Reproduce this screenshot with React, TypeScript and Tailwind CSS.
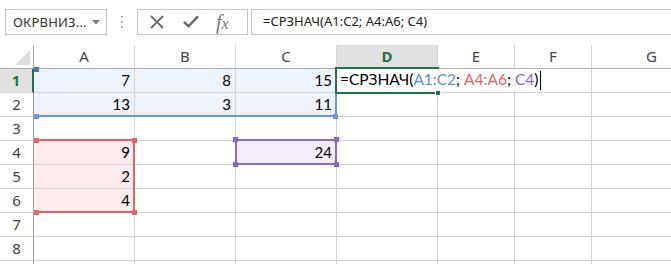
import React from "react";

const cols = ["A", "B", "C", "D", "E", "F", "G"];
const rows = [1, 2, 3, 4, 5, 6, 7, 8, 9];

type CellVal = { v?: string; bg?: string };
const data: Record<string, CellVal> = {
  A1: { v: "7", bg: "bg-[#eef2fb]" },
  B1: { v: "8", bg: "bg-[#eef2fb]" },
  C1: { v: "15", bg: "bg-[#eef2fb]" },
  A2: { v: "13", bg: "bg-[#eef2fb]" },
  B2: { v: "3", bg: "bg-[#eef2fb]" },
  C2: { v: "11", bg: "bg-[#eef2fb]" },
  A4: { v: "9", bg: "bg-[#fdeaea]" },
  A5: { v: "2", bg: "bg-[#fdeaea]" },
  A6: { v: "4", bg: "bg-[#fdeaea]" },
  C4: { v: "24", bg: "bg-[#f2eef9]" },
};

function Handle({ className }: { className: string }) {
  return <div className={`absolute w-[5px] h-[5px] ${className}`} />;
}

export default function App() {
  return (
    <div className="w-[671px] h-[264px] overflow-hidden bg-white" style={{ fontFamily: '"Noto Sans", "Open Sans", sans-serif' }}>
      {/* top bar */}
      <div className="h-[45px] flex items-start pt-[9px] bg-white">
        <div className="ml-[5px] w-[102px] h-[26px] border border-[#c6c6c6] flex items-center pl-[7px] pr-[6px] text-[13px] text-[#333]">
          <span className="flex-1 leading-none tracking-[0.2px]">ОКРВНИЗ...</span>
          <svg width="8" height="5" viewBox="0 0 8 5"><path d="M0 0 H8 L4 4.5 Z" fill="#777" /></svg>
        </div>
        <div className="w-[30px] h-[26px] flex flex-col items-center justify-center gap-[3px]">
          <div className="w-[2px] h-[2px] bg-[#b5b5b5]" />
          <div className="w-[2px] h-[2px] bg-[#b5b5b5]" />
          <div className="w-[2px] h-[2px] bg-[#b5b5b5]" />
        </div>
        <div className="w-[111px] h-[26px] border border-[#c6c6c6] flex items-center">
          <svg className="ml-[11px]" width="16" height="16" viewBox="0 0 16 16">
            <path d="M2 2 L14 14 M14 2 L2 14" stroke="#6b6b6b" strokeWidth="1.8" fill="none" />
          </svg>
          <svg className="ml-[17px]" width="18" height="16" viewBox="0 0 18 16">
            <path d="M1 8.5 L6.5 14 L17 3 L15 1.5 L6.5 10.5 L3 7 Z" fill="#6b6b6b" />
          </svg>
          <span className="ml-[16px] text-[#777] italic text-[20px] leading-none" style={{ fontFamily: '"Liberation Serif", "DejaVu Serif", serif' }}>
            <span>f</span><span className="text-[16px]">x</span>
          </span>
        </div>
        <div className="ml-[3px] flex-1 h-[26px] border border-[#c6c6c6] border-r-0 flex items-center pl-[11px] text-[13px] text-[#222]">
          =СРЗНАЧ(A1:C2; A4:A6; C4)
        </div>
      </div>

      {/* grid */}
      <div className="relative">
        <div className="grid grid-cols-[34px_101px_101px_101px_101px_77px_77px_120px] grid-rows-[24px_24px_24px_24px_24px_24px_24px_24px_24px_24px]">
          {/* header row */}
          <div className="relative border-r border-b border-[#ababab] bg-white">
            <svg className="absolute right-[3px] bottom-[3px]" width="15" height="15" viewBox="0 0 15 15">
              <path d="M15 0 V15 H0 Z" fill="#dcdcdc" />
            </svg>
          </div>
          {cols.map((c) =>
            c === "D" ? (
              <div key={c} className="border-r border-[#d4d4d4] border-b-2 border-b-[#217346] bg-[#e1e1e1] flex items-center justify-center text-[15px] font-bold text-[#217346]">
                {c}
              </div>
            ) : (
              <div key={c} className="border-r border-[#d4d4d4] border-b border-b-[#ababab] bg-white flex items-center justify-center text-[15px] text-[#444]">
                {c}
              </div>
            )
          )}
          {rows.map((r) => (
            <React.Fragment key={r}>
              {r === 1 ? (
                <div className="border-r-2 border-r-[#217346] border-b border-b-[#d4d4d4] bg-[#e1e1e1] flex items-center justify-center text-[15px] font-bold text-[#217346]">
                  {r}
                </div>
              ) : (
                <div className="border-r border-r-[#9e9e9e] border-b border-b-[#d4d4d4] bg-white flex items-center justify-center text-[15px] text-[#444]">
                  {r < 9 ? r : ""}
                </div>
              )}
              {cols.map((c) => {
                const d = data[c + r];
                if (c === "D" && r === 1) {
                  return (
                    <div key={c} className="relative border-r border-b border-[#d4d4d4] bg-white">
                      <div className="absolute left-0 top-0 w-[254px] h-[22px] bg-white pl-[3px] flex items-center whitespace-pre text-[15.5px] text-black z-10" style={{ fontFamily: '"Lato", "Noto Sans", sans-serif' }}>
                        <span className="whitespace-pre">=СРЗНАЧ(</span>
                        <span className="whitespace-pre text-[#5b8ed8]">A1:C2</span>
                        <span className="whitespace-pre">{"; "}</span>
                        <span className="whitespace-pre text-[#e06666]">A4:A6</span>
                        <span className="whitespace-pre">{"; "}</span>
                        <span className="whitespace-pre text-[#8a67c0]">C4</span>
                        <span className="whitespace-pre">)</span>
                        <span className="ml-[2px] w-[1px] h-[19px] bg-black" />
                      </div>
                    </div>
                  );
                }
                return (
                  <div
                    key={c}
                    className={`border-r border-b border-[#d4d4d4] ${d?.bg ?? "bg-white"} flex items-center justify-end pr-[4px] text-[15px] text-black`}
                    style={{ fontFamily: '"Lato", "Noto Sans", sans-serif' }}
                  >
                    {d?.v}
                  </div>
                );
              })}
            </React.Fragment>
          ))}
        </div>

        {/* blue range A1:C2 */}
        <div className="absolute left-[34px] top-[24px] w-[303px] h-[48px] border-b-2 border-r-2 border-[#6a96dc]" />
        <Handle className="left-[34px] top-[22px] w-[3px] h-[3px] bg-[#4a72b8]" />
        <Handle className="left-[34px] top-[69px] bg-[#6a96dc]" />
        <Handle className="left-[333px] top-[69px] bg-[#6a96dc]" />

        {/* red range A4:A6 */}
        <div className="absolute left-[34px] top-[94px] w-[101px] h-[74px] border-t-2 border-r-2 border-b-2 border-[#e06666]" />
        <Handle className="left-[34px] top-[93px] w-[3px] bg-[#e06666]" />
        <Handle className="left-[132px] top-[93px] bg-[#e06666]" />
        <Handle className="left-[34px] top-[165px] w-[3px] bg-[#e06666]" />
        <Handle className="left-[132px] top-[165px] bg-[#e06666]" />

        {/* purple range C4 */}
        <div className="absolute left-[235px] top-[94px] w-[102px] h-[26px] border-2 border-[#8a67c0]" />
        <Handle className="left-[233px] top-[92px] bg-[#8a67c0]" />
        <Handle className="left-[334px] top-[92px] bg-[#8a67c0]" />
        <Handle className="left-[233px] top-[117px] bg-[#8a67c0]" />
        <Handle className="left-[334px] top-[117px] bg-[#8a67c0]" />

        {/* active cell D1 */}
        <div className="absolute left-[335px] top-[22px] w-[104px] h-[27px] border-2 border-[#217346]" />
        <Handle className="left-[435px] top-[45px] bg-[#217346] border border-white w-[6px] h-[6px] z-20" />
      </div>
    </div>
  );
}
